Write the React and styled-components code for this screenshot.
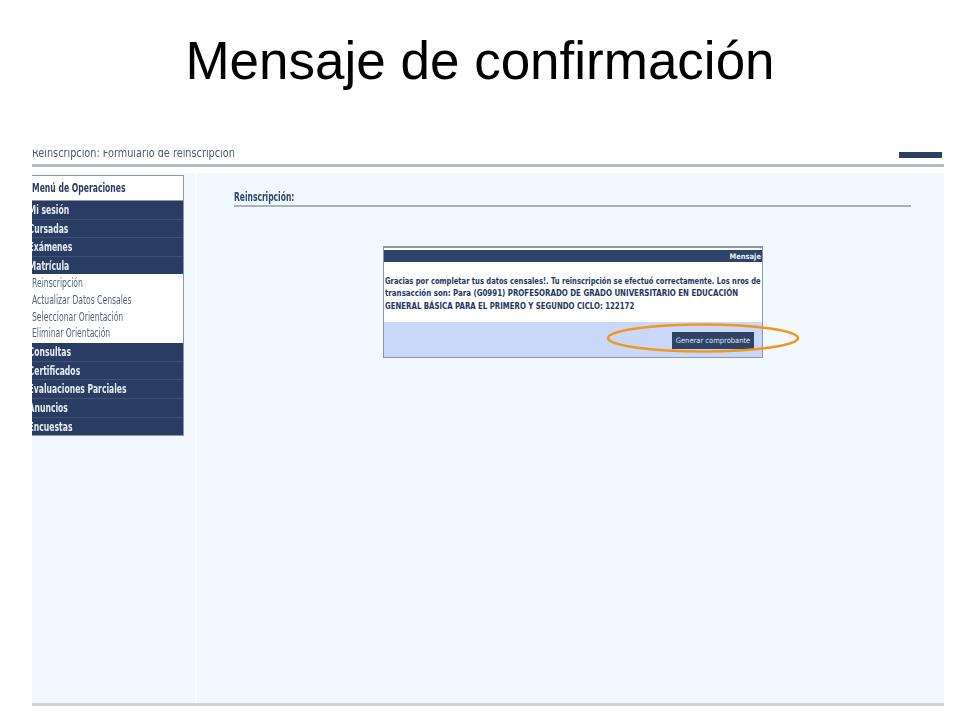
import React from "react";
import styled, { createGlobalStyle } from "styled-components";

const GlobalStyle = createGlobalStyle`
  html, body {
    margin: 0;
    padding: 0;
    background: #fff;
  }
`;

const Slide = styled.div`
  width: 960px;
  height: 720px;
  overflow: hidden;
  background: #fff;
`;

const Title = styled.h1`
  margin: 0;
  height: 150px;
  padding-top: 28px;
  box-sizing: border-box;
  font-family: "Liberation Sans", Arial, sans-serif;
  font-size: 53px;
  line-height: 66px;
  font-weight: 400;
  color: #000;
  text-align: center;
`;

const Shot = styled.div`
  width: 912px;
  margin-left: 32px;
  filter: blur(0.6px);
`;

const TopBar = styled.div`
  height: 14px;
  border-bottom: 3px solid #b4bcc0;
  display: flex;
  justify-content: space-between;
  overflow: hidden;
`;

const TopText = styled.div`
  margin-top: -4px;
  font-family: "DejaVu Sans", sans-serif;
  font-stretch: condensed;
  font-size: 13px;
  line-height: 14px;
  color: #4a5a70;
  transform: scaleX(0.83);
  transform-origin: left center;
  white-space: nowrap;
`;

const TopButton = styled.div`
  width: 43px;
  height: 6px;
  margin: 2px 2px 0 0;
  background: #2e3f66;
`;

const Body = styled.div`
  height: 530px;
  margin-top: 6px;
  display: grid;
  grid-template-columns: 163px 1fr;
  background: #f1f9ff;
  border-bottom: 3px solid #cbd3d5;
`;

const Side = styled.div`
  padding-top: 2px;
`;

const Menu = styled.div`
  width: 151px;
  border-right: 1px solid #8d98a6;
  border-bottom: 1px solid #8d98a6;
  overflow: hidden;
  font-family: "DejaVu Sans", sans-serif;
  font-stretch: condensed;
  white-space: nowrap;
`;

const MenuHead = styled.div`
  height: 24px;
  line-height: 24px;
  background: #fff;
  border-top: 1px solid #8d98a6;
  border-bottom: 1px solid #8d98a6;
  font-size: 12px;
  font-weight: 700;
  color: #2a3c62;
`;

const MenuLabel = styled.span`
  display: inline-block;
  transform: scaleX(${(p) => p.$sx || 0.71});
  transform-origin: left center;
`;

const MenuItem = styled.div`
  height: 17.6px;
  border-bottom: 1px solid #3f5178;
  line-height: 18px;
  background: #2a3c62;
  color: #e8edf5;
  font-size: 12px;
  font-weight: 700;
  text-indent: -2px;
  &:last-child {
    border-bottom: none;
  }
`;

const SubList = styled.div`
  background: #fff;
  margin-top: -1px;
  padding: 1px 0;
`;

const SubItem = styled.div`
  height: 16.7px;
  line-height: 17px;
  font-size: 11.5px;
  color: #56657c;
`;

const Main = styled.div`
  padding: 17px 33px 0 37px;
  border-left: 2px solid #f9fcff;
`;

const Heading = styled.div`
  height: 15px;
  line-height: 15px;
  border-bottom: 2px solid #a9b2b8;
  font-family: "DejaVu Sans", sans-serif;
  font-stretch: condensed;
  font-size: 12px;
  font-weight: 700;
  color: #2f4570;
  white-space: nowrap;
`;

const MsgBox = styled.div`
  position: relative;
  width: 378px;
  margin: 39px 0 0 149px;
  border: 1px solid #8d98a6;
  border-top-width: 2px;
  padding-top: 2px;
  background: #fff;
  font-family: "DejaVu Sans", sans-serif;
  font-stretch: condensed;
`;

const MsgHead = styled.div`
  height: 12px;
  line-height: 13px;
  padding-right: 1px;
  background: #2f4267;
  color: #eef2f8;
  font-size: 7.5px;
  font-weight: 700;
  text-align: right;
`;

const MsgText = styled.div`
  height: 60px;
  padding: 14px 0 0 1px;
  box-sizing: border-box;
  font-size: 8px;
  line-height: 12.3px;
  font-weight: 700;
  color: #24375f;
  white-space: nowrap;
`;

const MsgLine = styled.div`
  width: max-content;
  transform: scaleX(${(p) => p.$sx});
  transform-origin: left center;
`;

const MsgFoot = styled.div`
  height: 35px;
  background: #c9d8f8;
  display: flex;
  justify-content: flex-end;
  align-items: flex-start;
  padding: 10px 8px 0 0;
  box-sizing: border-box;
`;

const GenButton = styled.div`
  width: 82px;
  height: 17px;
  line-height: 17px;
  background: #2f4267;
  color: #dfe5ef;
  font-size: 7.5px;
  text-align: center;
`;

const Highlight = styled.svg`
  position: absolute;
  left: 222px;
  top: 75px;
  width: 194px;
  height: 32px;
  overflow: visible;
`;

const mainItems = ["Mi sesión", "Cursadas", "Exámenes", "Matrícula"];
const subItems = [
  "Reinscripción",
  "Actualizar Datos Censales",
  "Seleccionar Orientación",
  "Eliminar Orientación",
];
const otherItems = ["Consultas", "Certificados", "Evaluaciones Parciales", "Anuncios", "Encuestas"];

export default function App() {
  return (
    <Slide>
      <GlobalStyle />
      <Title>Mensaje de confirmación</Title>
      <Shot>
        <TopBar>
          <TopText>Reinscripción: Formulario de reinscripción</TopText>
          <TopButton />
        </TopBar>
        <Body>
          <Side>
            <Menu>
              <MenuHead>
                <MenuLabel>Menú de Operaciones</MenuLabel>
              </MenuHead>
              {mainItems.map((item) => (
                <MenuItem key={item}>
                  <MenuLabel>{item}</MenuLabel>
                </MenuItem>
              ))}
              <SubList>
                {subItems.map((item) => (
                  <SubItem key={item}>
                    <MenuLabel $sx={0.74}>{item}</MenuLabel>
                  </SubItem>
                ))}
              </SubList>
              {otherItems.map((item) => (
                <MenuItem key={item}>
                  <MenuLabel>{item}</MenuLabel>
                </MenuItem>
              ))}
            </Menu>
          </Side>
          <Main>
            <Heading>
              <MenuLabel $sx={0.7}>Reinscripción:</MenuLabel>
            </Heading>
            <MsgBox>
              <MsgHead>Mensaje</MsgHead>
              <MsgText>
                <MsgLine $sx={0.94}>
                  Gracias por completar tus datos censales!. Tu reinscripción se efectuó correctamente. Los nros de
                </MsgLine>
                <MsgLine $sx={0.98}>
                  transacción son: Para (G0991) PROFESORADO DE GRADO UNIVERSITARIO EN EDUCACIÓN
                </MsgLine>
                <MsgLine $sx={0.97}>GENERAL BÁSICA PARA EL PRIMERO Y SEGUNDO CICLO: 122172</MsgLine>
              </MsgText>
              <MsgFoot>
                <GenButton>Generar comprobante</GenButton>
              </MsgFoot>
              <Highlight viewBox="0 0 194 32">
                <ellipse cx="97" cy="15" rx="95" ry="13.5" fill="none" stroke="#f0971e" strokeWidth="2.5" />
              </Highlight>
            </MsgBox>
          </Main>
        </Body>
      </Shot>
    </Slide>
  );
}
